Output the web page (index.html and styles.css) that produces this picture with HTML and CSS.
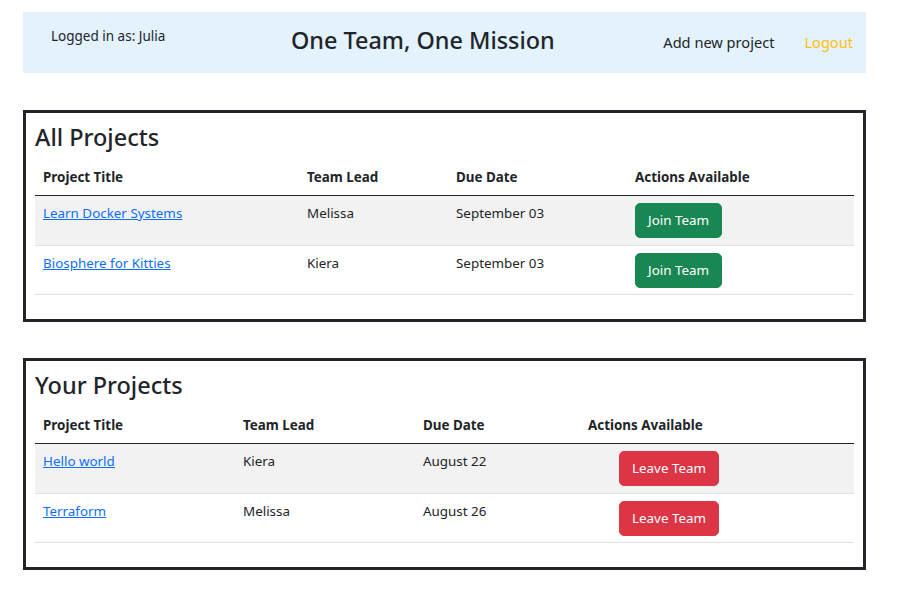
FILE: index.html
```html
<!DOCTYPE html>
<html lang="en">
<head>
<meta charset="utf-8">
<title>One Team, One Mission</title>
<link rel="stylesheet" href="styles.css">
</head>
<body>
<header class="topbar">
  <div class="user">Logged in as: Julia</div>
  <h4 class="brand">One Team, One Mission</h4>
  <nav class="nav">
    <a class="nav-link" href="#">Add new project</a>
    <a class="nav-link logout" href="#">Logout</a>
  </nav>
</header>

<section class="card">
  <h3 class="card-title">All Projects</h3>
  <table class="table">
    <colgroup>
      <col class="a1"><col class="a2"><col class="a3"><col class="a4">
    </colgroup>
    <thead>
      <tr><th>Project Title</th><th>Team Lead</th><th>Due Date</th><th>Actions Available</th></tr>
    </thead>
    <tbody>
      <tr class="striped"><td><a href="#">Learn Docker Systems</a></td><td>Melissa</td><td>September 03</td><td><button class="btn btn-join">Join Team</button></td></tr>
      <tr><td><a href="#">Biosphere for Kitties</a></td><td>Kiera</td><td>September 03</td><td><button class="btn btn-join">Join Team</button></td></tr>
    </tbody>
  </table>
</section>

<section class="card">
  <h3 class="card-title">Your Projects</h3>
  <table class="table">
    <colgroup>
      <col class="b1"><col class="b2"><col class="b3"><col class="b4">
    </colgroup>
    <thead>
      <tr><th>Project Title</th><th>Team Lead</th><th>Due Date</th><th>Actions Available</th></tr>
    </thead>
    <tbody>
      <tr class="striped"><td><a href="#">Hello world</a></td><td>Kiera</td><td>August 22</td><td><button class="btn btn-leave">Leave Team</button></td></tr>
      <tr><td><a href="#">Terraform</a></td><td>Melissa</td><td>August 26</td><td><button class="btn btn-leave">Leave Team</button></td></tr>
    </tbody>
  </table>
</section>
</body>
</html>
```
FILE: styles.css
```css
* { box-sizing: border-box; }

html, body {
  margin: 0;
  padding: 0;
  background: #ffffff;
}

body {
  font-family: "Noto Sans", "Open Sans", sans-serif;
  color: #212529;
  font-size: 13.4px;
  line-height: 1.5;
  padding: 12px 31px 20px 23px;
}

.topbar {
  display: flex;
  align-items: center;
  height: 61px;
  background: #e3f2fd;
  padding: 0 13px 0 28px;
}

.user {
  width: 240px;
  font-size: 13.5px;
  margin-bottom: 12px;
}

.brand {
  margin: 0 0 5px 0;
  font-size: 23.4px;
  font-weight: 500;
  line-height: 1.2;
}

.nav {
  margin-left: auto;
  display: flex;
  gap: 30px;
  font-size: 14.6px;
  line-height: 24px;
  margin-bottom: 2px;
}

.nav-link {
  color: #212529;
  text-decoration: none;
}

.nav-link.logout {
  color: #ffc107;
}

.card {
  margin-top: 37px;
  border: 3px solid #212529;
  padding: 9px;
}

.card + .card {
  margin-top: 36px;
}

.card-title {
  margin: 0 0 7px 0;
  font-size: 23.5px;
  font-weight: 500;
  line-height: 31px;
}

.table {
  width: 100%;
  border-collapse: separate;
  border-spacing: 0;
  table-layout: fixed;
  margin-bottom: 15px;
}

.table th,
.table td {
  text-align: left;
  vertical-align: top;
  padding: 7px 8px;
  line-height: 21px;
}

.table th {
  font-weight: 700;
  border-bottom: 1px solid #212529;
}

.table td {
  padding-bottom: 6.5px;
  border-bottom: 1px solid #dee2e6;
}

.table tr.striped td {
  background: #f2f2f2;
}

.table a {
  color: #0d6efd;
  text-decoration: underline;
}

.a1 { width: 264px; }
.a2 { width: 149px; }
.a3 { width: 179px; }
.a4 { width: auto; }

.b1 { width: 200px; }
.b2 { width: 180px; }
.b3 { width: 165px; }
.b4 { width: auto; }

.btn {
  display: inline-block;
  vertical-align: top;
  font-family: inherit;
  font-size: 13.4px;
  line-height: 21px;
  padding: 6px 12px;
  border: 1px solid transparent;
  border-radius: 5px;
  color: #ffffff;
  cursor: pointer;
}

.btn-join {
  background: #198754;
  border-color: #198754;
}

.btn-leave {
  background: #dc3545;
  border-color: #dc3545;
  margin-left: 31px;
}
```
